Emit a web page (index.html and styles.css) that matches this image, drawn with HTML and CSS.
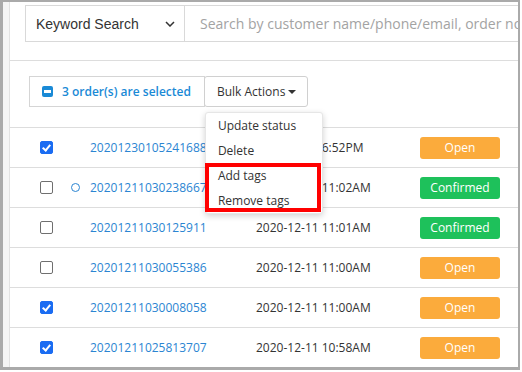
FILE: index.html
```html
<!DOCTYPE html>
<html lang="en">
<head>
    <meta charset="UTF-8">
    <meta name="viewport" content="width=device-width, initial-scale=1.0">
    <title>Orders</title>
    <link rel="stylesheet" href="styles.css">
</head>
<body>
    <div class="frame">
        <div class="gutter"></div>
        <div class="main">
            <div class="search-bar">
                <div class="search">
                    <div class="search-type">
                        Keyword Search
                        <svg class="chevron" width="10" height="6" viewBox="0 0 10 6">
                            <path d="M1 1 L5 5 L9 1" fill="none" stroke="#333" stroke-width="1.5"/>
                        </svg>
                    </div>
                    <input class="search-input" type="text" placeholder="Search by customer name/phone/email, order no.">
                </div>
            </div>

            <div class="toolbar">
                <div class="selected">
                    <span class="minus-box"></span>
                    3 order(s) are selected
                </div>
                <div class="bulk">
                    <button class="bulk-button">Bulk Actions <span class="caret"></span></button>
                    <div class="menu">
                        <div class="menu-item">Update status</div>
                        <div class="menu-item">Delete</div>
                        <div class="menu-item">Add tags</div>
                        <div class="menu-item">Remove tags</div>
                        <!-- annotation -->
                        <div class="highlight"></div>
                    </div>
                </div>
            </div>

            <div class="orders">
                <div class="order-row">
                    <div class="cell-check"><span class="checkbox checked"></span></div>
                    <div class="cell-dot"></div>
                    <div class="cell-order"><a href="#">20201230105241688</a></div>
                    <div class="cell-date">2020-12-30 6:52PM</div>
                    <div class="cell-status"><span class="badge open">Open</span></div>
                </div>
                <div class="order-row">
                    <div class="cell-check"><span class="checkbox"></span></div>
                    <div class="cell-dot"><span class="dot"></span></div>
                    <div class="cell-order"><a href="#">20201211030238667</a></div>
                    <div class="cell-date">2020-12-11 11:02AM</div>
                    <div class="cell-status"><span class="badge confirmed">Confirmed</span></div>
                </div>
                <div class="order-row">
                    <div class="cell-check"><span class="checkbox"></span></div>
                    <div class="cell-dot"></div>
                    <div class="cell-order"><a href="#">20201211030125911</a></div>
                    <div class="cell-date">2020-12-11 11:01AM</div>
                    <div class="cell-status"><span class="badge confirmed">Confirmed</span></div>
                </div>
                <div class="order-row">
                    <div class="cell-check"><span class="checkbox"></span></div>
                    <div class="cell-dot"></div>
                    <div class="cell-order"><a href="#">20201211030055386</a></div>
                    <div class="cell-date">2020-12-11 11:00AM</div>
                    <div class="cell-status"><span class="badge open">Open</span></div>
                </div>
                <div class="order-row">
                    <div class="cell-check"><span class="checkbox checked"></span></div>
                    <div class="cell-dot"></div>
                    <div class="cell-order"><a href="#">20201211030008058</a></div>
                    <div class="cell-date">2020-12-11 11:00AM</div>
                    <div class="cell-status"><span class="badge open">Open</span></div>
                </div>
                <div class="order-row">
                    <div class="cell-check"><span class="checkbox checked"></span></div>
                    <div class="cell-dot"></div>
                    <div class="cell-order"><a href="#">20201211025813707</a></div>
                    <div class="cell-date">2020-12-11 10:58AM</div>
                    <div class="cell-status"><span class="badge open">Open</span></div>
                </div>
            </div>
        </div>
    </div>
</body>
</html>
```

FILE: styles.css
```css
body {
    margin: 0;
    padding: 0;
    background-color: #ffffff;
    font-family: "Open Sans", Arial, sans-serif;
    font-size: 12px;
    color: #333333;
}
.frame {
    display: flex;
    width: 520px;
    height: 370px;
    box-sizing: border-box;
    border-style: solid;
    border-color: #aaaaaa;
    border-width: 2px 2px 3px 3px;
    overflow: hidden;
}
.gutter {
    width: 6px;
    flex-shrink: 0;
    background-color: #f5f5f5;
    border-right: 1px solid #e2e2e2;
}
.main {
    flex: 1;
    overflow: hidden;
    background-color: #ffffff;
}
.search-bar {
    padding: 3px 0 18px 15px;
    border-bottom: 1px solid #dddddd;
}
.search {
    display: flex;
    width: 600px;
    height: 37px;
    box-sizing: border-box;
    border: 1px solid #d9d9d9;
}
.search-type {
    display: flex;
    align-items: center;
    justify-content: space-between;
    width: 159px;
    box-sizing: border-box;
    padding: 0 9px 0 10px;
    border-right: 1px solid #d9d9d9;
    font-family: "Liberation Sans", Arial, sans-serif;
    font-size: 14px;
    color: #333333;
}
.search-input {
    flex: 1;
    border: none;
    outline: none;
    padding: 0 0 0 15px;
    font-family: "Open Sans", Arial, sans-serif;
    font-size: 14px;
    color: #333333;
}
.search-input::placeholder {
    color: #a3a3a3;
}
.toolbar {
    display: flex;
    margin-top: 15px;
    padding-left: 19px;
}
.selected {
    display: flex;
    align-items: center;
    gap: 9px;
    height: 31px;
    box-sizing: border-box;
    padding: 0 13px 0 12px;
    border: 1px solid #d5d5d5;
    color: #1a8ad6;
    font-weight: 600;
}
.minus-box {
    position: relative;
    width: 11px;
    height: 11px;
    border-radius: 2px;
    background-color: #1a8ad6;
}
.minus-box::after {
    content: '';
    position: absolute;
    left: 2px;
    right: 2px;
    top: 4px;
    height: 3px;
    background-color: #ffffff;
}
.bulk {
    position: relative;
    margin-left: -1px;
}
.bulk-button {
    display: flex;
    align-items: center;
    gap: 3px;
    height: 31px;
    box-sizing: border-box;
    padding: 0 11px 0 12px;
    background-color: #ffffff;
    border: 1px solid #d0d0d0;
    border-radius: 3px;
    font-family: "Open Sans", Arial, sans-serif;
    font-size: 12px;
    color: #333333;
}
.caret {
    width: 0;
    height: 0;
    border-left: 4px solid transparent;
    border-right: 4px solid transparent;
    border-top: 4px solid #333333;
    margin-top: 1px;
}
.menu {
    position: absolute;
    left: 1px;
    top: 36px;
    width: 118px;
    box-sizing: border-box;
    background-color: #ffffff;
    border: 1px solid #e6e6e6;
    border-radius: 3px;
    box-shadow: 0 2px 6px rgba(0, 0, 0, 0.18);
    z-index: 10;
}
.menu-item {
    height: 25px;
    line-height: 25px;
    padding: 0 12px;
    color: #333333;
    white-space: nowrap;
}
.highlight {
    position: absolute;
    left: -1px;
    top: 50px;
    width: 116px;
    height: 49px;
    box-sizing: border-box;
    border: 4px solid #ff0000;
}
.orders {
    margin-top: 20px;
}
.order-row {
    display: flex;
    align-items: center;
    height: 40px;
    box-sizing: border-box;
    padding-left: 30px;
    border-top: 1px solid #dddddd;
}
.cell-check {
    width: 31px;
    display: flex;
}
.cell-dot {
    width: 19px;
    display: flex;
}
.cell-order {
    width: 166px;
}
.cell-order a {
    color: #2b85d2;
    text-decoration: none;
}
.cell-date {
    width: 164px;
    white-space: nowrap;
    color: #333333;
}
.cell-status {
    width: 80px;
}
.checkbox {
    width: 13px;
    height: 13px;
    box-sizing: border-box;
    border: 1px solid #6f6f6f;
    border-radius: 2px;
    background-color: #ffffff;
    position: relative;
}
.checkbox.checked {
    border-color: #1a6cf2;
    background-color: #1a6cf2;
}
.checkbox.checked::after {
    content: '';
    position: absolute;
    left: 3px;
    top: 1px;
    width: 3px;
    height: 6px;
    border-right: 2px solid #ffffff;
    border-bottom: 2px solid #ffffff;
    transform: rotate(40deg);
}
.dot {
    width: 9px;
    height: 9px;
    box-sizing: border-box;
    border: 1.5px solid #2b85d2;
    border-radius: 50%;
}
.badge {
    display: block;
    width: 80px;
    height: 22px;
    line-height: 22px;
    border-radius: 3px;
    text-align: center;
    color: #ffffff;
    font-size: 12px;
}
.badge.open {
    background-color: #fbab3c;
}
.badge.confirmed {
    background-color: #1ec15b;
}
```
